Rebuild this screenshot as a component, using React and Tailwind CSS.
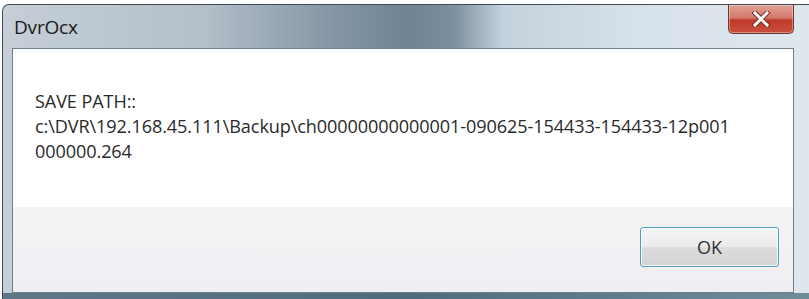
import React from 'react';

const CloseButton = () => (
  <div className="w-[66px] h-[29px] rounded-b-[5px] border border-t-0 border-[#6b3a35] bg-[linear-gradient(180deg,#e0a196_0%,#d47a6c_45%,#c0392a_55%,#c9503c_100%)] flex items-center justify-center shadow-[inset_0_0_0_1px_rgba(255,255,255,0.35)]">
    <svg width="20" height="16" viewBox="0 0 20 16">
      <path d="M4 2 L16 14 M16 2 L4 14" stroke="#7a3026" strokeWidth="5" strokeLinecap="square" />
      <path d="M4 2 L16 14 M16 2 L4 14" stroke="#ffffff" strokeWidth="3" strokeLinecap="square" />
    </svg>
  </div>
);

const App = () => {
  return (
    <div className="w-[809px] h-[299px] bg-white overflow-hidden pt-[4px] pl-[2px]" style={{ fontFamily: '"Open Sans", "Noto Sans", sans-serif' }}>
      <div className="h-[295px] rounded-tl-[7px] border border-r-0 border-b-0 border-[#3f4a54] flex flex-col bg-[linear-gradient(90deg,#c6cfd7_0%,#b3bfc9_25%,#8798a7_40%,#6f8394_50%,#7d909f_56%,#c4d2dd_62%,#d8e2ea_80%,#dfe7ee_100%)]">
        <div className="h-[43px] flex items-start justify-between pr-[15px]">
          <div className="pl-[11px] pt-[11px] text-[19px] leading-[22px] text-[#1a1a1a] tracking-[-0.2px]">DvrOcx</div>
          <CloseButton />
        </div>
        <div className="ml-[9px] mr-[15px] h-[245px] border border-[#6f7f8c] flex flex-col">
          <div className="flex-1 bg-white pl-[22px] pt-[40px] text-[18.1px] leading-[25px] text-[#2a2a2a] tracking-[-0.1px]">
            <div>SAVE PATH::</div>
            <div>c:\DVR\192.168.45.111\Backup\ch00000000000001-090625-154433-154433-12p001</div>
            <div>000000.264</div>
          </div>
          <div className="h-[85px] bg-[linear-gradient(180deg,#f6f3f6_0%,#f1eef3_100%)] flex items-start justify-end pr-[14px] pt-[20px]">
            <button className="w-[139px] h-[40px] rounded-[3px] border border-[#4f9cc4] bg-[linear-gradient(180deg,#f4f4f4_0%,#ececec_48%,#dcdcdc_52%,#d4d4d4_100%)] shadow-[inset_0_0_0_1px_rgba(255,255,255,0.8)] text-[18px] text-[#333333]">
              OK
            </button>
          </div>
        </div>
        <div className="flex-1 bg-[linear-gradient(90deg,#5e7888_0%,#4f6a7c_50%,#6f8c9b_100%)]" />
      </div>
    </div>
  );
};

export default App;
